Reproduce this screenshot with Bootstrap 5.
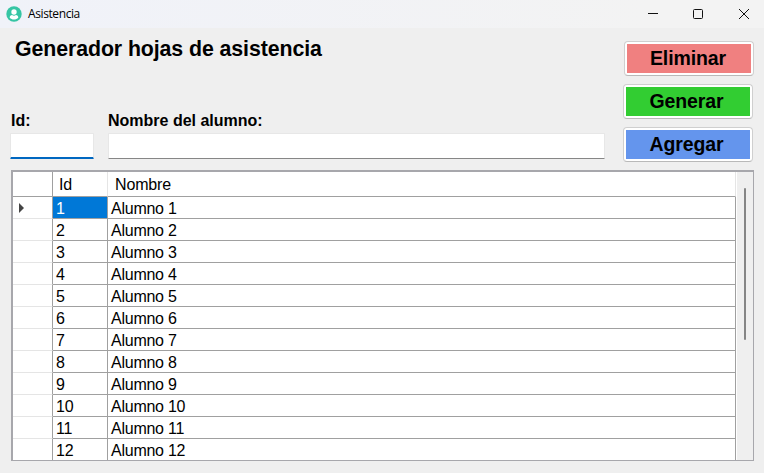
<!DOCTYPE html>
<html lang="es">
<head>
<meta charset="utf-8">
<meta name="viewport" content="width=device-width, initial-scale=1">
<title>Asistencia</title>
<link href="https://cdn.jsdelivr.net/npm/bootstrap@5.3.0/dist/css/bootstrap.min.css" rel="stylesheet">
<style>
body{width:764px;height:473px;background:#efefef;color:#000;font:16px/18px "Liberation Sans",Arial,sans-serif}
.titlebar{height:28px;background:linear-gradient(90deg,#f0f2f9,#f3f3f3 85%);padding-left:6px}
.app-name{font:12px/16px "Open Sans","Noto Sans",sans-serif;margin-left:6px;letter-spacing:-.4px}
.win-controls{padding-right:14px;gap:33px}
.win-controls svg:nth-child(-n+2){margin-left:-1px;margin-right:1px}
.top-area{height:142px;padding-left:11px}
.heading{font-size:21.333px;line-height:24px;margin:9px 0 0 4px;letter-spacing:-.09px}
.fields{margin-top:51px;gap:14px}
.fields label{line-height:18px;margin-bottom:3px}
.form-control.field{height:26px;border:1px solid #e7e7e7;border-bottom-color:#868686;border-radius:1px;padding:2px 4px;background:#fff;box-shadow:none}
.form-control.id-field{width:84px;margin-left:-1px;border-bottom:2px solid #0067c0}
.form-control.name-field{width:497px}
.actions{padding-top:13px;gap:8px;width:141px}
.btn.action{width:130px;height:35px;border:1px solid #cfcfcf;border-bottom-color:#b9b9b9;border-radius:4px;padding:2px;background:#fff;font-size:19.5px;line-height:29px;letter-spacing:-.1px}
.btn.action span{display:block;height:29px;color:#000;padding-right:3px}
.btn.shifted{margin-left:1px}
.red span{background:#f08080}.green span{background:#32cd32}.blue span{background:#6495ed}
.btn.red span{padding-right:2px}
.grid-box{width:743px;height:291px;margin-left:11px;border:1px solid #a7a7ac;border-width:2px 1px 1px 2px}
.grid-table{width:723px;table-layout:fixed;border-collapse:separate;border-spacing:0;background:#fff;line-height:18px;letter-spacing:-.25px}
.grid-table th,.grid-table td{height:22px;padding:3px 0 0 3px;font-weight:400;border-right:1px solid #a0a0a0;border-bottom:1px solid #a0a0a0;text-align:left;vertical-align:middle;white-space:nowrap}
.grid-table thead th{height:25px;padding:1px 0 0 7px;border-right-color:#e5e5e5;letter-spacing:-.15px}
.grid-table thead th:nth-child(2){padding-left:6px}
.grid-table tr>:first-child{border-right-color:#a0a0a0;padding:0 0 0 6px}
.grid-table tbody tr>:first-child{border-bottom-color:#e5e5e5}
.grid-table tbody tr:last-child>*{height:21px;border-bottom:0}
.grid-table td.selected{background:#0078d7;color:#fff}
.grid-table svg{display:block}
.scroll-track{width:17px;padding:16px 0 0 7px;border-left:1px solid #fff}
.scroll-thumb{width:2px;height:152px;background:#858585;border-radius:1px}
</style>
</head>
<body class="overflow-hidden">
<header class="titlebar d-flex align-items-center">
  <svg width="16" height="16" viewBox="0 0 16 16" aria-hidden="true"><circle cx="8" cy="8" r="7.700" fill="#35c5a4"/><circle cx="8" cy="6" r="2.700" fill="#fff"/><path d="M3.700 11.800c0-1.800 1-2.600 2.400-2.700 1.100.7 2.700.7 3.800 0 1.400.1 2.400.9 2.400 2.700C11.200 13 9.700 13.600 8 13.600S4.800 13 3.700 11.800Z" fill="#fff"/></svg>
  <span class="app-name">Asistencia</span>
  <div class="win-controls d-flex align-items-center ms-auto">
    <svg width="12" height="12" viewBox="0 0 12 12"><path d="M1 4.500h10" transform="translate(0 1)" stroke="#111"/></svg>
    <svg width="12" height="12" viewBox="0 0 12 12"><rect x="1.500" y="1.500" width="9" height="9" rx="1" fill="none" stroke="#111"/></svg>
    <svg width="12" height="12" viewBox="0 0 12 12"><path d="m1 1 10 10M11 1 1 11" stroke="#111"/></svg>
  </div>
</header>
<main>
  <section class="top-area d-flex justify-content-between">
    <div>
      <h1 class="heading fw-bold">Generador hojas de asistencia</h1>
      <div class="fields d-flex">
        <div><label class="fw-bold d-block" for="student-id">Id:</label><input id="student-id" class="form-control field id-field" type="text"></div>
        <div><label class="fw-bold d-block" for="student-name">Nombre del alumno:</label><input id="student-name" class="form-control field name-field" type="text"></div>
      </div>
    </div>
    <div class="actions d-flex flex-column">
      <button class="btn action shifted red fw-bold" type="button"><span>Eliminar</span></button>
      <button class="btn action green fw-bold" type="button"><span>Generar</span></button>
      <button class="btn action blue fw-bold" type="button"><span>Agregar</span></button>
    </div>
  </section>
  <section class="grid-box d-flex overflow-hidden">
    <table class="grid-table flex-shrink-0">
      <colgroup><col style="width:40px"><col style="width:55px"><col></colgroup>
      <thead><tr><th></th><th>Id</th><th>Nombre</th></tr></thead>
      <tbody>
        <tr><td><svg width="5" height="10" viewBox="0 0 5 10"><path d="M0 0v10l5-5Z" fill="#444"/></svg></td><td class="selected">1</td><td>Alumno 1</td></tr>
        <tr><td></td><td>2</td><td>Alumno 2</td></tr>
        <tr><td></td><td>3</td><td>Alumno 3</td></tr>
        <tr><td></td><td>4</td><td>Alumno 4</td></tr>
        <tr><td></td><td>5</td><td>Alumno 5</td></tr>
        <tr><td></td><td>6</td><td>Alumno 6</td></tr>
        <tr><td></td><td>7</td><td>Alumno 7</td></tr>
        <tr><td></td><td>8</td><td>Alumno 8</td></tr>
        <tr><td></td><td>9</td><td>Alumno 9</td></tr>
        <tr><td></td><td>10</td><td>Alumno 10</td></tr>
        <tr><td></td><td>11</td><td>Alumno 11</td></tr>
        <tr><td></td><td>12</td><td>Alumno 12</td></tr>
      </tbody>
    </table>
    <div class="scroll-track"><div class="scroll-thumb"></div></div>
  </section>
</main>
<script src="https://cdn.jsdelivr.net/npm/bootstrap@5.3.0/dist/js/bootstrap.bundle.min.js"></script>
</body>
</html>
